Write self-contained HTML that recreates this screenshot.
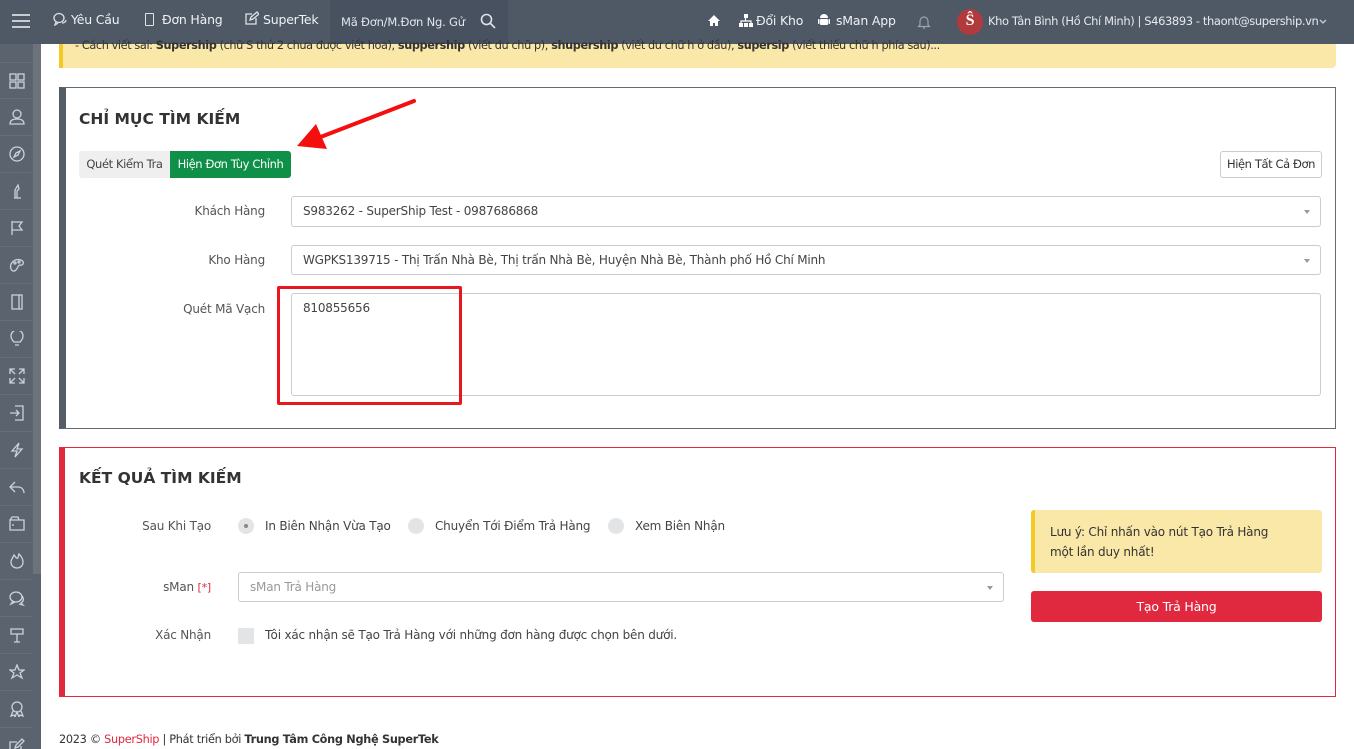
<!DOCTYPE html>
<html><head><meta charset="utf-8"><style>
*{box-sizing:border-box;margin:0;padding:0}
html,body{width:1354px;height:749px;overflow:hidden}
body{background:#fff;font-family:"DejaVu Sans","Liberation Sans",sans-serif;font-size:12px;letter-spacing:-0.2px;color:#333;position:relative}
.abs{position:absolute}
#top{left:0;top:0;width:1354px;height:44px;background:#4f5966;color:#eef1f5}
#side{left:0;top:44px;width:41px;height:705px;background:#5b636e}
.si{position:absolute;left:0;width:33px;height:37px;border-bottom:1px solid #666e79}
.si svg{position:absolute;left:9px;top:10px}
.lbl{position:absolute;text-align:right;color:#555}
.inp{position:absolute;border:1px solid #c9ccd3;border-radius:3px;background:#fff;color:#444;padding-left:11px}
.caret{position:absolute;right:10px;top:13px;width:0;height:0;border-left:3.5px solid transparent;border-right:3.5px solid transparent;border-top:4px solid #999}
.radio{position:absolute;width:16px;height:16px;border-radius:50%;background:#e3e4e6}
</style></head><body>

<div id="top" class="abs">
  <div class="abs" style="left:12px;top:14px;width:18px;height:2px;background:#c8cdd4;box-shadow:0 6px 0 #c8cdd4,0 12px 0 #c8cdd4"></div>
  <svg class="abs" style="left:53px;top:12px" width="14" height="14" viewBox="0 0 14 14" fill="none" stroke="#dfe3e8" stroke-width="1.3"><ellipse cx="6" cy="6" rx="5" ry="4.5"/><path d="M3 10l-1 3 3-2M9 11a4 3 0 0 0 4-3"/></svg>
  <div class="abs" style="left:71px;top:12px;font-size:12.5px">Yêu Cầu</div>
  <div class="abs" style="left:145px;top:13px;width:9px;height:13px;border:1.5px solid #dfe3e8;border-radius:1px"></div>
  <div class="abs" style="left:162px;top:12px;font-size:12.5px">Đơn Hàng</div>
  <svg class="abs" style="left:244px;top:11px" width="15" height="15" viewBox="0 0 15 15" fill="none" stroke="#dfe3e8" stroke-width="1.3"><path d="M12 7v6H2V3h6"/><path d="M6 9l1-3 6-5 2 2-6 5z"/></svg>
  <div class="abs" style="left:263px;top:12px;font-size:12.5px">SuperTek</div>
  <div class="abs" style="left:330px;top:0;width:178px;height:44px;background:#475160"></div>
  <div class="abs" style="left:341px;top:15px;font-size:11.5px;color:#e2e6eb">Mã Đơn/M.Đơn Ng. Gử</div>
  <svg class="abs" style="left:480px;top:13px" width="16" height="16" viewBox="0 0 16 16" fill="none" stroke="#dfe3e8" stroke-width="1.6"><circle cx="6.5" cy="6.5" r="5"/><path d="M10 10l5 5"/></svg>
  <svg class="abs" style="left:708px;top:15px" width="12" height="11" viewBox="0 0 12 11" fill="#fff"><path d="M6 0L0 6h2v5h3V8h2v3h3V6h2z"/></svg>
  <svg class="abs" style="left:739px;top:14px" width="14" height="13" viewBox="0 0 14 13" fill="#fff"><rect x="5" y="0" width="4" height="4"/><rect x="0" y="9" width="4" height="4"/><rect x="5" y="9" width="4" height="4"/><rect x="10" y="9" width="4" height="4"/><path d="M6.5 4v3M2 9V7h10v2" stroke="#fff" stroke-width="1.2" fill="none"/></svg>
  <div class="abs" style="left:756px;top:13px;font-size:12.5px">Đổi Kho</div>
  <svg class="abs" style="left:818px;top:13px" width="12" height="14" viewBox="0 0 12 14" fill="#fff"><path d="M2 5a4 4 0 0 1 8 0z"/><rect x="2" y="6" width="8" height="6" rx="1"/><rect x="0" y="6" width="1.5" height="5" rx=".7"/><rect x="10.5" y="6" width="1.5" height="5" rx=".7"/></svg>
  <div class="abs" style="left:836px;top:13px;font-size:12.5px">sMan App</div>
  <svg class="abs" style="left:917px;top:14px" width="14" height="16" viewBox="0 0 14 16" fill="none" stroke="#9aa2ad" stroke-width="1.2"><path d="M3 11V7a4 4 0 0 1 8 0v4l1.5 1.5h-11zM6 14h2"/></svg>
  <div class="abs" style="left:957px;top:9px;width:26px;height:26px;border-radius:50%;background:#b13a3d;color:#fff;font:bold 16px 'Liberation Serif',serif;text-align:center;line-height:24px">Ŝ</div>
  <div class="abs" style="left:988px;top:14px;font-size:11.5px;letter-spacing:-0.4px;color:#e6e9ee">Kho Tân Bình (Hồ Chí Minh) | S463893 - thaont@supership.vn</div>
  <svg class="abs" style="left:1319px;top:19px" width="8" height="6" viewBox="0 0 8 6" fill="none" stroke="#ccd" stroke-width="1.3"><path d="M1 1l3 3 3-3"/></svg>
</div>

<div id="side" class="abs">
  <div class="abs" style="left:33px;top:0;width:8px;height:530px;background:#6c737d"></div>
</div>
<div class="abs" style="left:0;top:62px;width:33px;height:687px;overflow:hidden" id="sideitems"></div>
<script>
var icons=[
'<rect x="1" y="1" width="6" height="6"/><rect x="9" y="1" width="6" height="6"/><rect x="1" y="9" width="6" height="6"/><rect x="9" y="9" width="6" height="6"/>',
'<circle cx="8" cy="5" r="4"/><path d="M1 15c0-4 3-5 7-5s7 1 7 5z"/>',
'<circle cx="8" cy="8" r="7"/><path d="M11 5l-2 4-4 2 2-4z"/>',
'<path d="M5 15h7M6 15V7l3-5 1 4-2 2v7"/>',
'<path d="M3 15V1M3 2h10l-3 4 3 4H3"/>',
'<path d="M2 12C0 6 6 1 12 3c4 2 2 6-1 5-2 0-2 3-4 5-2 2-4 1-5-1z"/><circle cx="6" cy="6" r="1"/><circle cx="10" cy="5" r="1"/>',
'<rect x="3" y="1" width="10" height="14"/><path d="M10 1v14"/>',
'<path d="M5 11c-2-2-3-4-3-6a6 6 0 0 1 12 0c0 2-1 4-3 6zM6 14h4"/>',
'<path d="M1 6V1h5M10 1h5v5M15 10v5h-5M6 15H1v-5M1 1l5 5M15 1l-5 5M15 15l-5-5M1 15l5-5"/>',
'<path d="M1 8h9M7 5l3 3-3 3M6 1h8v14H6"/>',
'<path d="M10 1L3 9h5l-2 6 7-8H8z"/>',
'<path d="M6 3L1 8l5 5M1 8h8c4 0 6 3 6 6"/>',
'<path d="M1 4h14v10H1zM1 4l2-3h6l1 3M3 9h2"/>',
'<path d="M8 15c-3 0-6-2-6-6 0-3 2-4 3-7 2 2 2 4 4 3 0-2 1-3 1-4 3 3 4 5 4 8 0 4-3 6-6 6z"/>',
'<ellipse cx="7" cy="7" rx="6" ry="5"/><path d="M4 11l-2 3 4-2M13 6c2 2 2 5-1 7l2 2-4-1"/>',
'<path d="M2 2h12v5H2zM8 7v8M5 15h6"/>',
'<path d="M8 1l2 5h5l-4 3 2 5-5-3-5 3 2-5-4-3h5z"/>',
'<circle cx="8" cy="6" r="5"/><path d="M4 10l-2 5 3-1 1 2 2-5 2 5 1-2 3 1-2-5"/>',
'<path d="M12 8v7H1V4h7M6 10l1-3 6-6 2 2-6 6z"/>'
];
var h='';for(var i=0;i<icons.length;i++){h+='<div class="si" style="top:'+(i*37)+'px;border-top:'+(i==0?'1px solid #666e79':'0')+'"><svg width="16" height="16" viewBox="0 0 16 16" fill="none" stroke="#c6d3e3" stroke-width="1.3">'+icons[i]+'</svg></div>';}
document.getElementById('sideitems').innerHTML=h;
</script>

<div class="abs" style="left:59px;top:44px;width:1277px;height:24px;background:#fae8a9;border-left:4px solid #f5c924;border-radius:0 0 4px 0"></div>
<div class="abs" style="left:75px;top:39px;font-size:11.3px;letter-spacing:-0.4px;color:#333;white-space:nowrap">- Cách viết sai: <b>Supership</b> (chữ S thứ 2 chưa được viết hoa), <b>suppership</b> (viết dư chữ p), <b>shupership</b> (viết dư chữ h ở đầu), <b>supersip</b> (viết thiếu chữ h phía sau)...</div>

<div class="abs" style="left:59px;top:87px;width:1277px;height:342px;border:1px solid #656b73;border-left:7px solid #545c66"></div>
<div class="abs" style="left:79px;top:110px;font-size:15.5px;font-weight:bold;color:#333;letter-spacing:0">CHỈ MỤC TÌM KIẾM</div>
<div class="abs" style="left:79px;top:151px;width:91px;height:27px;background:#efefef;border-radius:3px 0 0 3px;font-size:11.5px;letter-spacing:-0.4px;color:#444;text-align:center;line-height:27px">Quét Kiểm Tra</div>
<div class="abs" style="left:170px;top:151px;width:121px;height:27px;background:#0f9049;border-radius:0 3px 3px 0;font-size:11.5px;letter-spacing:-0.4px;color:#fff;text-align:center;line-height:27px">Hiện Đơn Tùy Chỉnh</div>
<div class="abs" style="left:1220px;top:151px;width:102px;height:27px;border:1px solid #c9ccd3;border-radius:3px;font-size:11.5px;letter-spacing:-0.4px;color:#333;text-align:center;line-height:25px">Hiện Tất Cả Đơn</div>

<div class="lbl" style="left:120px;width:145px;top:204px">Khách Hàng</div>
<div class="inp" style="left:291px;top:196px;width:1030px;height:31px;line-height:29px">S983262 - SuperShip Test - 0987686868<span class="caret"></span></div>
<div class="lbl" style="left:120px;width:145px;top:253px">Kho Hàng</div>
<div class="inp" style="left:291px;top:245px;width:1030px;height:30px;line-height:28px">WGPKS139715 - Thị Trấn Nhà Bè, Thị trấn Nhà Bè, Huyện Nhà Bè, Thành phố Hồ Chí Minh<span class="caret"></span></div>
<div class="lbl" style="left:120px;width:145px;top:302px">Quét Mã Vạch</div>
<div class="inp" style="left:291px;top:293px;width:1030px;height:103px;padding-top:7px">810855656</div>
<div class="abs" style="left:277px;top:286px;width:185px;height:119px;border:3px solid #e8161d;border-radius:2px"></div>

<svg class="abs" style="left:0;top:0" width="1354" height="749"><path d="M414 101L318 138" stroke="#f40e0e" stroke-width="4" stroke-linecap="round"/><path d="M297 146L316 124L327 149Z" fill="#f40e0e"/></svg>

<div class="abs" style="left:59px;top:447px;width:1277px;height:250px;border:1px solid #e0283f;border-left:6px solid #e0283f"></div>
<div class="abs" style="left:79px;top:469px;font-size:15.5px;font-weight:bold;color:#333;letter-spacing:0">KẾT QUẢ TÌM KIẾM</div>
<div class="lbl" style="left:100px;width:111px;top:519px">Sau Khi Tạo</div>
<div class="radio" style="left:238px;top:518px"><div class="abs" style="left:6px;top:6px;width:4px;height:4px;border-radius:50%;background:#888"></div></div>
<div class="abs" style="left:265px;top:519px;color:#444">In Biên Nhận Vừa Tạo</div>
<div class="radio" style="left:408px;top:518px"></div>
<div class="abs" style="left:435px;top:519px;color:#444">Chuyển Tới Điểm Trả Hàng</div>
<div class="radio" style="left:608px;top:518px"></div>
<div class="abs" style="left:635px;top:519px;color:#444">Xem Biên Nhận</div>

<div class="lbl" style="left:100px;width:111px;top:580px">sMan <span style="color:#e0283f;font-size:11px">[*]</span></div>
<div class="inp" style="left:238px;top:572px;width:766px;height:30px;line-height:28px;color:#999">sMan Trả Hàng<span class="caret"></span></div>
<div class="lbl" style="left:100px;width:111px;top:628px">Xác Nhận</div>
<div class="abs" style="left:238px;top:628px;width:16px;height:16px;background:#e3e4e6"></div>
<div class="abs" style="left:265px;top:628px;color:#444">Tôi xác nhận sẽ Tạo Trả Hàng với những đơn hàng được chọn bên dưới.</div>

<div class="abs" style="left:1031px;top:510px;width:291px;height:63px;background:#fae8a9;border-left:4px solid #f5c924;border-radius:3px;padding:12px 0 0 15px;line-height:20px;color:#333">Lưu ý: Chỉ nhấn vào nút Tạo Trả Hàng<br>một lần duy nhất!</div>
<div class="abs" style="left:1031px;top:591px;width:291px;height:31px;background:#e0283f;border-radius:3px;color:#fff;text-align:center;line-height:31px;font-size:12.5px">Tạo Trả Hàng</div>

<div class="abs" style="left:59px;top:733px;font-size:11.3px;letter-spacing:-0.3px;color:#333">2023 © <span style="color:#e0283f">SuperShip</span> | Phát triển bởi <b>Trung Tâm Công Nghệ SuperTek</b></div>
</body></html>
